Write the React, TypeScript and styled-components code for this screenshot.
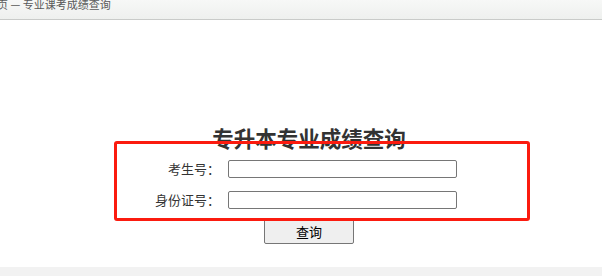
import React from 'react'
import styled, { createGlobalStyle } from 'styled-components'

const GlobalStyle = createGlobalStyle`
  html, body {
    margin: 0;
    padding: 0;
    background: #ffffff;
    font-family: "Noto Sans CJK SC", "Noto Sans", sans-serif;
  }
`

const Page = styled.div`
  position: relative;
  width: 602px;
  height: 276px;
  overflow: hidden;
  display: flex;
  flex-direction: column;
  background: #ffffff;
`

const TopBar = styled.div`
  height: 19px;
  flex-shrink: 0;
  display: flex;
  align-items: flex-start;
  overflow: hidden;
  background: linear-gradient(#f7f8f7, #eef0ee);
  border-bottom: 1px solid #c9cbc9;
`

const TabLabel = styled.span`
  margin: -2px 0 0 -3px;
  font-size: 11px;
  line-height: 12px;
  color: #5a5a5a;
  white-space: nowrap;
`

const Main = styled.main`
  flex: 1;
  display: flex;
  flex-direction: column;
  padding: 105px 0 0 16px;
`

const Title = styled.h1`
  margin: 0;
  text-align: center;
  font-size: 21.5px;
  line-height: 25px;
  font-weight: 700;
  color: #333333;
`

const Form = styled.form`
  display: grid;
  grid-template-columns: 204px 229px;
  column-gap: 8px;
  row-gap: 13px;
  align-items: center;
  margin-top: 10px;
`

const Label = styled.label`
  text-align: right;
  font-size: 13px;
  line-height: 18px;
  color: #333333;
`

const Field = styled.input`
  box-sizing: border-box;
  width: 229px;
  height: 18px;
  margin: 0;
  padding: 0 3px;
  border: 1px solid #767676;
  border-radius: 2px;
  background: #ffffff;
  font-size: 12px;
`

const Actions = styled.div`
  display: flex;
  justify-content: center;
  margin-top: 9px;
`

const SubmitButton = styled.button`
  box-sizing: border-box;
  width: 90px;
  height: 26px;
  padding: 0;
  border: 1px solid #767676;
  border-radius: 2px;
  background: #efefef;
  font-family: "Noto Sans CJK SC", "Noto Sans", sans-serif;
  font-size: 13px;
  color: #000000;
`

const Footer = styled.div`
  height: 9px;
  flex-shrink: 0;
  background: #f2f2f2;
`

// annotation frame drawn over the form
const Highlight = styled.div`
  position: absolute;
  left: 114px;
  top: 141px;
  width: 416px;
  height: 80px;
  box-sizing: border-box;
  border: 3px solid #fb1b0f;
  border-radius: 3px;
  pointer-events: none;
`

export default function App() {
  return (
    <>
      <GlobalStyle />
      <Page>
        <TopBar>
          <TabLabel>页 — 专业课考成绩查询</TabLabel>
        </TopBar>
        <Main>
          <Title>专升本专业成绩查询</Title>
          <Form onSubmit={e => e.preventDefault()}>
            <Label htmlFor="ksh">考生号：</Label>
            <Field id="ksh" type="text" />
            <Label htmlFor="sfzh">身份证号：</Label>
            <Field id="sfzh" type="text" />
          </Form>
          <Actions>
            <SubmitButton type="button">查询</SubmitButton>
          </Actions>
        </Main>
        <Footer />
        <Highlight />
      </Page>
    </>
  )
}
